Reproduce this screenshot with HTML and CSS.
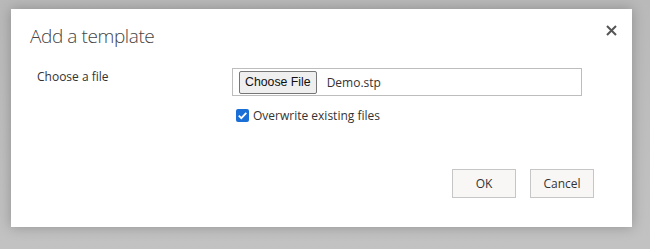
FILE: index.html
```html
<!DOCTYPE html>
<html>
<head>
<meta charset="utf-8">
<link rel="stylesheet" href="styles.css">
</head>
<body>
<div class="dialog">
  <div class="header">
    <h1 class="title">Add a template</h1>
    <span class="close" aria-label="Close">
      <svg width="11" height="11" viewBox="0 0 11 11"><path d="M1 1 L10 10 M10 1 L1 10" stroke="#555" stroke-width="2" fill="none"/></svg>
    </span>
  </div>
  <div class="form">
    <div class="label">Choose a file</div>
    <div class="field">
      <div class="file">
        <span class="choose">Choose File</span>
        <span class="filename">Demo.stp</span>
      </div>
      <label class="check">
        <span class="box">
          <svg width="13" height="13" viewBox="0 0 13 13"><rect width="13" height="13" rx="2" fill="#1a6fd6"/><path d="M2.8 6.6 L5.3 9.1 L10.3 3.8" stroke="#fff" stroke-width="1.8" fill="none"/></svg>
        </span>
        <span>Overwrite existing files</span>
      </label>
    </div>
  </div>
  <div class="buttons">
    <span class="btn">OK</span>
    <span class="btn">Cancel</span>
  </div>
</div>
</body>
</html>
```
FILE: styles.css
```css
html, body { margin: 0; padding: 0; }
body {
  width: 650px;
  height: 249px;
  background: linear-gradient(#b9b9b9, #c2c2c2);
  font-family: "Open Sans", "Liberation Sans", sans-serif;
  overflow: hidden;
}
.dialog {
  margin: 9px 0 0 11px;
  width: 621px;
  height: 218px;
  background: #fff;
  box-shadow: 0 0 12px rgba(0,0,0,0.25);
  box-sizing: border-box;
  padding: 0 0 0 19px;
  display: flex;
  flex-direction: column;
}
.header {
  display: flex;
  justify-content: space-between;
  align-items: flex-start;
  height: 59px;
}
.title {
  margin: 13px 0 0 0;
  font-size: 19px;
  letter-spacing: -0.4px;
  font-weight: 300;
  color: #444;
  line-height: 28px;
}
.close {
  margin: 16px 15px 0 0;
  display: flex;
}
.form {
  display: flex;
  padding-left: 7px;
}
.label {
  width: 195px;
  font-size: 12px;
  color: #333;
  line-height: 16px;
  margin-top: 1px;
}
.field { display: flex; flex-direction: column; }
.file {
  width: 350px;
  height: 28px;
  box-sizing: border-box;
  border: 1px solid #bdbdbd;
  display: flex;
  align-items: center;
  padding-left: 6px;
  color: #333;
}
.choose {
  font-family: "Liberation Sans", Arial, sans-serif;
  font-size: 12.3px;
  color: #111;
  background: #efefef;
  border: 1px solid #767676;
  border-radius: 2px;
  padding: 2px 5px;
  line-height: 17px;
  margin-right: 10px;
}
.filename { font-size: 12px; color: #333; }
.check {
  display: flex;
  align-items: center;
  margin-top: 11px;
  margin-left: 4px;
  font-size: 12px;
  color: #333;
  gap: 4px;
}
.box { display: flex; }
.buttons {
  display: flex;
  justify-content: flex-end;
  gap: 14px;
  margin-top: 45px;
  padding-right: 38px;
}
.btn {
  width: 64px;
  height: 29px;
  box-sizing: border-box;
  border: 1px solid #c6c6c6;
  background: #f8f7f6;
  display: flex;
  align-items: center;
  justify-content: center;
  font-size: 12px;
  color: #333;
}
```
